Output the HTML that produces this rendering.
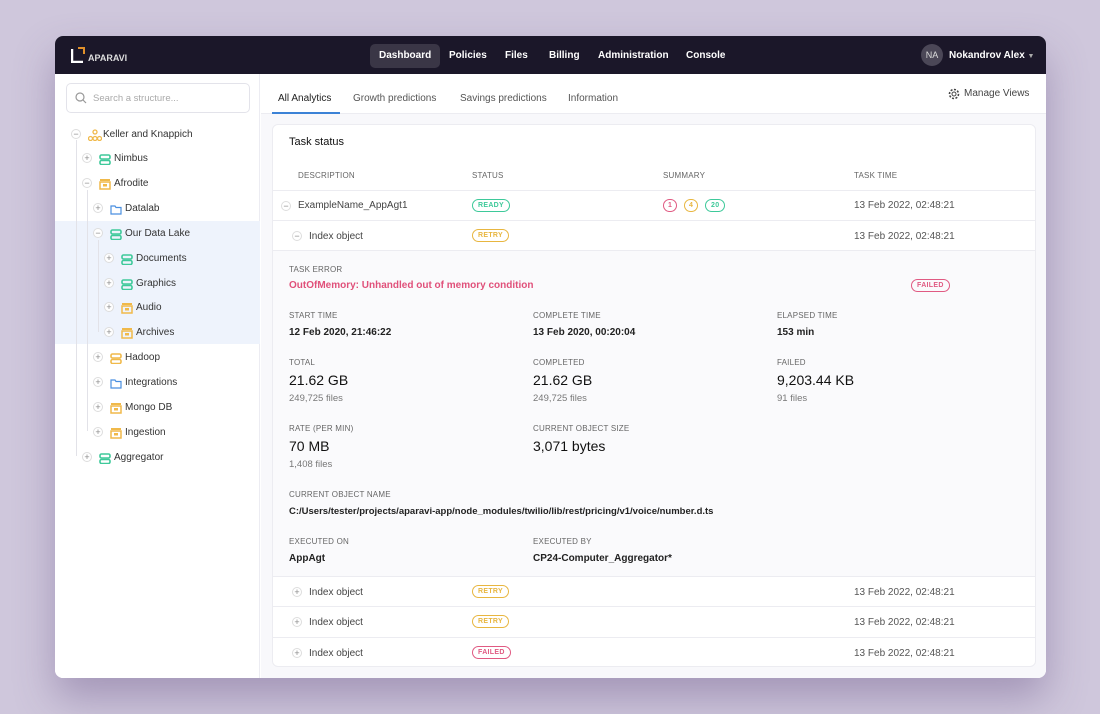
<!DOCTYPE html>
<html><head><meta charset="utf-8"><style>
*{margin:0;padding:0;box-sizing:border-box}
body{width:1100px;height:714px;background:#cfc7dc;font-family:"Liberation Sans",sans-serif;position:relative;overflow:hidden;color:#222}
.win{position:absolute;left:55px;top:36px;width:991px;height:642px;background:#fff;border-radius:8px;overflow:hidden;box-shadow:0 20px 40px rgba(110,90,140,.45)}
.hdr{position:absolute;left:0;top:0;width:991px;height:38px;background:#1b1729}
.nav{position:absolute;top:7px;height:24px;line-height:24px;color:#fff;font-size:10px;font-weight:bold;padding:0 9px;border-radius:5px}
.a{position:absolute;white-space:nowrap}
.side{position:absolute;left:0;top:38px;width:205px;height:604px;background:#fff;border-right:1px solid #ececf2}
.main{position:absolute;left:206px;top:38px;width:785px;height:604px;background:#f8f8fb}
.t{font-size:10px;color:#333}
.tog{position:absolute;width:10px;height:10px;border:1px solid #ddd;border-radius:50%;background:#fff;font-size:9px;line-height:8px;text-align:center;color:#888}
.lbl{font-size:8px;color:#666;letter-spacing:.2px}
.v{font-size:10px;font-weight:bold;color:#222}
.big{font-size:14px;color:#111}
.sm{font-size:9.5px;color:#777}
.badge{position:absolute;height:13px;line-height:11px;border:1px solid;border-radius:7px;font-size:7px;font-weight:bold;padding:0 5px;letter-spacing:.3px}
.hl{position:absolute;left:0;height:1px;width:763px;background:#ececf1}
</style></head><body>
<div class="win">
 <div class="hdr">
  <svg class="a" style="left:16px;top:11px" width="70" height="16"><path d="M1 2v13h11" stroke="#fff" stroke-width="2.5" fill="none"/><path d="M7 1h6v6" stroke="#e0902a" stroke-width="2" fill="none"/><text x="17" y="14" fill="#ddd" font-size="9" font-weight="bold" font-family="Liberation Sans">APARAVI</text></svg>
  <div class="nav" style="left:315px;top:8px;background:#3a3646">Dashboard</div>
  <div class="nav" style="left:385px;top:8px">Policies</div>
  <div class="nav" style="left:441px;top:8px">Files</div>
  <div class="nav" style="left:485px;top:8px">Billing</div>
  <div class="nav" style="left:534px;top:8px">Administration</div>
  <div class="nav" style="left:622px;top:8px">Console</div>
  <div class="a" style="left:866px;top:8px;width:22px;height:22px;border-radius:50%;background:#4b4757;color:#ddd;font-size:9px;line-height:22px;text-align:center">NA</div>
  <div class="a" style="left:894px;top:14px;color:#fff;font-size:10px;font-weight:bold">Nokandrov Alex <span style="font-size:7px;color:#aaa">▼</span></div>
 </div>
 <div class="side">
  <div class="a" style="left:11px;top:9px;width:184px;height:30px;border:1px solid #e3e3ea;border-radius:5px"></div>
  <svg class="a" style="left:20px;top:18px" width="12" height="12"><circle cx="5" cy="5" r="4" stroke="#999" stroke-width="1.2" fill="none"/><path d="M8 8l3 3" stroke="#999" stroke-width="1.2"/></svg>
  <div class="a" style="left:38px;top:19px;font-size:9.5px;color:#aaa">Search a structure...</div>
  <div class="a" style="left:0;top:147px;width:205px;height:123px;background:#eef3fc"></div>
  <div class="a" style="left:21px;top:66px;width:1px;height:316px;background:#e2e2e8"></div>
  <div class="a" style="left:32px;top:116px;width:1px;height:241px;background:#e2e2e8"></div>
  <div class="a" style="left:43px;top:166px;width:1px;height:92px;background:#e2e2e8"></div>
  <div id="tree"></div>
 </div>
 <div class="main">
  <div class="a" style="left:0;top:0;width:785px;height:40px;background:#fff;border-bottom:1px solid #ececf1"></div>
  <div class="a t" style="left:17px;top:19px;color:#222">All Analytics</div>
  <div class="a" style="left:11px;top:38px;width:68px;height:2px;background:#3b82d6"></div>
  <div class="a t" style="left:92px;top:19px;color:#555">Growth predictions</div>
  <div class="a t" style="left:199px;top:19px;color:#555">Savings predictions</div>
  <div class="a t" style="left:307px;top:19px;color:#555">Information</div>
  <svg class="a" style="left:687px;top:14px" width="12" height="12"><circle cx="6" cy="6" r="2" stroke="#444" fill="none"/><circle cx="6" cy="6" r="4.5" stroke="#444" stroke-dasharray="2 1.5" stroke-width="1.6" fill="none"/></svg>
  <div class="a t" style="left:703px;top:14px;color:#444">Manage Views</div>
  <div class="a" style="left:11px;top:50px;width:764px;height:543px;background:#fff;border:1px solid #ececf1;border-radius:6px;overflow:hidden">
   <div class="a" style="left:16px;top:11px;font-size:11px;color:#111">Task status</div>
   <div class="a lbl" style="left:25px;top:46px">DESCRIPTION</div>
   <div class="a lbl" style="left:199px;top:46px">STATUS</div>
   <div class="a lbl" style="left:390px;top:46px">SUMMARY</div>
   <div class="a lbl" style="left:581px;top:46px">TASK TIME</div>
   <div class="hl" style="top:65px"></div>
   <div class="tog" style="left:8px;top:76px">−</div><div class="a t" style="left:25px;top:75px;color:#444">ExampleName_AppAgt1</div>
   <div class="badge" style="left:199px;top:74px;color:#3ec99a">READY</div>
   <div class="badge" style="left:390px;top:74px;color:#e05a82;padding:0 4px">1</div>
   <div class="badge" style="left:411px;top:74px;color:#e8b640;padding:0 4px">4</div>
   <div class="badge" style="left:432px;top:74px;color:#3ec99a">20</div>
   <div class="a t" style="left:581px;top:75px;color:#555">13 Feb 2022, 02:48:21</div>
   <div class="hl" style="top:95px"></div>
   <div class="tog" style="left:19px;top:106px">−</div><div class="a t" style="left:36px;top:106px;color:#444">Index object</div>
   <div class="badge" style="left:199px;top:104px;color:#e8b640">RETRY</div>
   <div class="a t" style="left:581px;top:106px;color:#555">13 Feb 2022, 02:48:21</div>
   <div class="hl" style="top:125px"></div>
   <div class="a" style="left:0;top:126px;width:764px;height:325px;background:#fafafc"></div>
   <div class="a lbl" style="left:16px;top:140px">TASK ERROR</div>
   <div class="a" style="left:16px;top:155px;font-size:10px;font-weight:bold;color:#e0507a">OutOfMemory: Unhandled out of memory condition</div>
   <div class="badge" style="left:638px;top:154px;color:#e05a82">FAILED</div>
   <div class="a lbl" style="left:16px;top:186px">START TIME</div><div class="a v" style="left:16px;top:202px">12 Feb 2020, 21:46:22</div>
   <div class="a lbl" style="left:260px;top:186px">COMPLETE TIME</div><div class="a v" style="left:260px;top:202px">13 Feb 2020, 00:20:04</div>
   <div class="a lbl" style="left:504px;top:186px">ELAPSED TIME</div><div class="a v" style="left:504px;top:202px">153 min</div>
   <div class="a lbl" style="left:16px;top:233px">TOTAL</div><div class="a big" style="left:16px;top:247px">21.62 GB</div><div class="a sm" style="left:16px;top:268px">249,725 files</div>
   <div class="a lbl" style="left:260px;top:233px">COMPLETED</div><div class="a big" style="left:260px;top:247px">21.62 GB</div><div class="a sm" style="left:260px;top:268px">249,725 files</div>
   <div class="a lbl" style="left:504px;top:233px">FAILED</div><div class="a big" style="left:504px;top:247px">9,203.44 KB</div><div class="a sm" style="left:504px;top:268px">91 files</div>
   <div class="a lbl" style="left:16px;top:299px">RATE (PER MIN)</div><div class="a big" style="left:16px;top:313px">70 MB</div><div class="a sm" style="left:16px;top:334px">1,408 files</div>
   <div class="a lbl" style="left:260px;top:299px">CURRENT OBJECT SIZE</div><div class="a big" style="left:260px;top:313px">3,071 bytes</div>
   <div class="a lbl" style="left:16px;top:365px">CURRENT OBJECT NAME</div><div class="a v" style="left:16px;top:381px;font-size:9.5px">C:/Users/tester/projects/aparavi-app/node_modules/twilio/lib/rest/pricing/v1/voice/number.d.ts</div>
   <div class="a lbl" style="left:16px;top:412px">EXECUTED ON</div><div class="a v" style="left:16px;top:428px">AppAgt</div>
   <div class="a lbl" style="left:260px;top:412px">EXECUTED BY</div><div class="a v" style="left:260px;top:428px">CP24-Computer_Aggregator*</div>
   <div class="hl" style="top:451px"></div>
   <div class="tog" style="left:19px;top:462px">+</div><div class="a t" style="left:36px;top:462px;color:#444">Index object</div>
   <div class="badge" style="left:199px;top:460px;color:#e8b640">RETRY</div><div class="a t" style="left:581px;top:462px;color:#555">13 Feb 2022, 02:48:21</div>
   <div class="hl" style="top:481px"></div>
   <div class="tog" style="left:19px;top:492px">+</div><div class="a t" style="left:36px;top:492px;color:#444">Index object</div>
   <div class="badge" style="left:199px;top:490px;color:#e8b640">RETRY</div><div class="a t" style="left:581px;top:492px;color:#555">13 Feb 2022, 02:48:21</div>
   <div class="hl" style="top:512px"></div>
   <div class="tog" style="left:19px;top:523px">+</div><div class="a t" style="left:36px;top:523px;color:#444">Index object</div>
   <div class="badge" style="left:199px;top:521px;color:#e05a82">FAILED</div><div class="a t" style="left:581px;top:523px;color:#555">13 Feb 2022, 02:48:21</div>
  </div>
 </div>
</div>
<script>
var G='#3ec99a',Y='#f0b94a',B='#4a8fe0';
function ic(k){
 if(k=='db'||k=='dby'){var c=k=='db'?G:Y;return '<svg width="12" height="11"><rect x="1" y="1" width="10" height="4" rx="1.5" fill="none" stroke="'+c+'" stroke-width="1.6"/><rect x="1" y="6.5" width="10" height="4" rx="1.5" fill="none" stroke="'+c+'" stroke-width="1.6"/></svg>';}
 if(k=='f')return '<svg width="12" height="11"><path d="M1 2h4l1 1.5h5v6.5h-10z" fill="none" stroke="'+B+'" stroke-width="1.2"/></svg>';
 if(k=='ar')return '<svg width="12" height="12"><rect x="1" y="1" width="10" height="2" fill="'+Y+'"/><rect x="1" y="4" width="10" height="7" fill="none" stroke="'+Y+'" stroke-width="1.5"/><rect x="4" y="6" width="4" height="2.5" fill="'+Y+'"/></svg>';
 return '<svg width="14" height="12"><circle cx="7" cy="3" r="2" fill="none" stroke="'+Y+'" stroke-width="1.3"/><circle cx="2.5" cy="9.5" r="2" fill="none" stroke="'+Y+'" stroke-width="1.3"/><circle cx="7" cy="9.5" r="2" fill="none" stroke="'+Y+'" stroke-width="1.3"/><circle cx="11.5" cy="9.5" r="2" fill="none" stroke="'+Y+'" stroke-width="1.3"/></svg>';
}
var rows=[[0,'−','org','Keller and Knappich'],[1,'+','db','Nimbus'],[1,'−','ar','Afrodite'],[2,'+','f','Datalab'],[2,'−','db','Our Data Lake'],[3,'+','db','Documents'],[3,'+','db','Graphics'],[3,'+','ar','Audio'],[3,'+','ar','Archives'],[2,'+','dby','Hadoop'],[2,'+','f','Integrations'],[2,'+','ar','Mongo DB'],[2,'+','ar','Ingestion'],[1,'+','db','Aggregator']];
var h='';rows.forEach(function(r,i){var y=59.5+i*24.85,x=16+r[0]*11;
h+='<div class="tog" style="left:'+x+'px;top:'+(y-5)+'px">'+r[1]+'</div><div class="a" style="left:'+(x+17)+'px;top:'+(y-6)+'px">'+ic(r[2])+'</div><div class="a t" style="left:'+(x+32)+'px;top:'+(y-5)+'px">'+r[3]+'</div>';});
document.getElementById('tree').innerHTML=h;
</script>
</body></html>
